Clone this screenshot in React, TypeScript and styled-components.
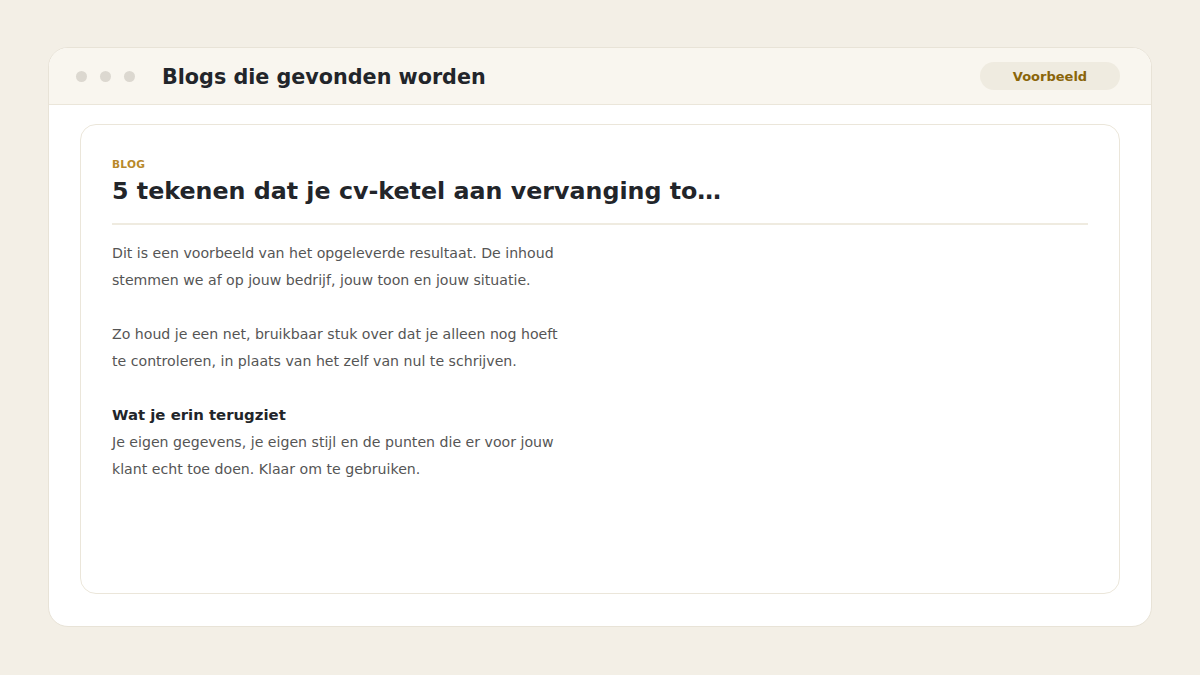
import styled, { createGlobalStyle } from "styled-components";

const GlobalStyle = createGlobalStyle`
  html, body {
    margin: 0;
    padding: 0;
    background-color: #f3efe6;
  }

  * {
    box-sizing: border-box;
  }
`;

const Page = styled.div`
  width: 1200px;
  height: 675px;
  padding: 47px 48px 48px;

  font-family: "DejaVu Sans", "Liberation Sans", sans-serif;

  display: flex;
`;

const Window = styled.div`
  flex: 1;

  background-color: #ffffff;
  border: 1px solid #e8e3d7;
  border-radius: 20px;
  overflow: hidden;

  display: flex;
  flex-direction: column;
`;

const TopBar = styled.div`
  height: 57px;
  padding: 0 31px 0 27px;

  background-color: #f9f6ef;
  border-bottom: 1px solid #ebe6da;

  display: flex;
  align-items: center;
`;

const Dots = styled.div`
  display: flex;
  gap: 13px;
  margin-right: 27px;
`;

const Dot = styled.span`
  width: 11px;
  height: 11px;
  border-radius: 50%;
  background-color: #dcd8d0;
`;

const WindowTitle = styled.h1`
  margin: 2px 0 0;
  flex: 1;

  color: #22252a;
  font-size: 20.7px;
  font-weight: 700;
`;

const Badge = styled.span`
  width: 140px;
  height: 28px;
  border-radius: 14px;

  background-color: #efebe0;
  color: #8a650a;
  font-size: 13px;
  font-weight: 700;

  display: flex;
  align-items: center;
  justify-content: center;
`;

const Body = styled.div`
  flex: 1;
  padding: 19px 31px 32px;
  display: flex;
`;

const Card = styled.article`
  flex: 1;
  padding: 32px 31px 31px;

  border: 1px solid #ebe6da;
  border-radius: 16px;

  display: flex;
  flex-direction: column;
`;

const Label = styled.span`
  color: #b8892a;
  font-size: 10.6px;
  font-weight: 700;
  line-height: 14px;
  letter-spacing: 0.3px;
`;

const Title = styled.h2`
  margin: 5px 0 17px;

  color: #22252a;
  font-size: 23.75px;
  font-weight: 700;
  line-height: 30px;
`;

const Divider = styled.hr`
  margin: 0 0 15px;
  height: 2px;
  border: none;
  background-color: #efebe0;
`;

const Text = styled.p<{ gap?: boolean }>`
  max-width: 452px;
  margin: 0 0 ${({ gap }) => (gap ? "27px" : "0")};

  color: #555555;
  font-size: 14.13px;
  line-height: 27px;
`;

const SubTitle = styled.h3`
  margin: 0;

  color: #22252a;
  font-size: 14.9px;
  font-weight: 700;
  line-height: 27px;
`;

const App = () => {
  return (
    <Page>
      <GlobalStyle />
      <Window>
        <TopBar>
          <Dots>
            <Dot />
            <Dot />
            <Dot />
          </Dots>
          <WindowTitle>Blogs die gevonden worden</WindowTitle>
          <Badge>Voorbeeld</Badge>
        </TopBar>
        <Body>
          <Card>
            <Label>BLOG</Label>
            <Title>5 tekenen dat je cv-ketel aan vervanging to…</Title>
            <Divider />
            <Text gap>
              Dit is een voorbeeld van het opgeleverde resultaat. De inhoud
              stemmen we af op jouw bedrijf, jouw toon en jouw situatie.
            </Text>
            <Text gap>
              Zo houd je een net, bruikbaar stuk over dat je alleen nog hoeft
              te controleren, in plaats van het zelf van nul te schrijven.
            </Text>
            <SubTitle>Wat je erin terugziet</SubTitle>
            <Text>
              Je eigen gegevens, je eigen stijl en de punten die er voor jouw
              klant echt toe doen. Klaar om te gebruiken.
            </Text>
          </Card>
        </Body>
      </Window>
    </Page>
  );
};

export default App;
